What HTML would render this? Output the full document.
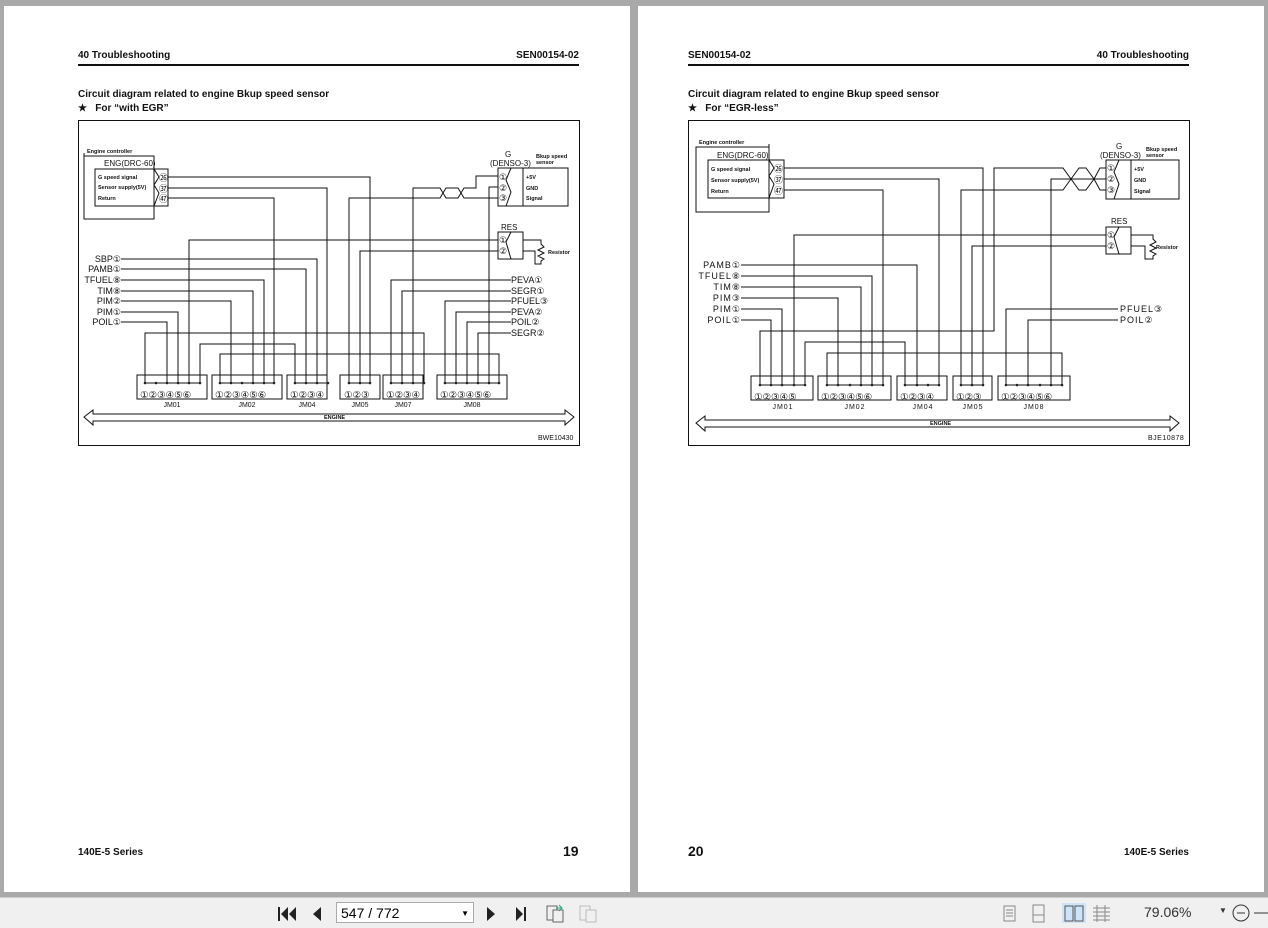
<!DOCTYPE html>
<html><head><meta charset="utf-8"><style>
body{margin:0;width:1268px;height:927px;background:#a9a9a9;position:relative;overflow:hidden;font-family:"Liberation Sans",sans-serif}
.page{position:absolute;top:6px;width:626px;height:886px;background:#fff}
.t{position:absolute;font-size:10px;font-weight:bold;color:#111;white-space:nowrap}
.rule{position:absolute;height:2px;background:#111}
svg text{font-family:"Liberation Sans","DejaVu Sans",sans-serif;fill:#111}
.tb{position:absolute;left:0;top:897px;width:1268px;height:30px;background:#f0f0f0;border-top:1px solid #ccc}
</style></head><body>

<div class="page" style="left:4px">
<div class="t" style="left:74px;top:44px">40 Troubleshooting</div>
<div class="t" style="right:51px;top:44px">SEN00154-02</div>
<div class="rule" style="left:74px;top:58px;width:501px"></div>
<div class="t" style="left:74px;top:83px">Circuit diagram related to engine Bkup speed sensor</div>
<div class="t" style="left:74px;top:97px">★&nbsp;&nbsp; For “with EGR”</div>
<div class="t" style="left:74px;top:841px">140E-5 Series</div>
<div class="t" style="left:559px;top:837px;font-size:14px">19</div>
<svg style="position:absolute;left:74px;top:114px" width="502" height="326" viewBox="0 0 502 326">
<g fill="none" stroke="#111" stroke-width="1">
<rect x="0.5" y="0.5" width="501" height="325"/>
<path d="M6 36H76V99H6Z"/><path d="M6 36V33"/>
<rect x="17" y="49" width="73" height="37"/>
<path d="M76 49L81 57L76 65L81 73L76 86"/>
<path d="M90 57H292V263M90 68H249V263M90 78H196V263"/>
<path d="M271 263V78H362L368 68H380L386 78H420"/>
<path d="M335 263V68H362L368 78H380L386 68H398V56H420"/>
<path d="M411 263V67H420"/>
<rect x="420" y="48" width="25" height="38"/><rect x="445" y="48" width="45" height="38"/>
<path d="M433 48L428 60L433 72L428 86"/>
<rect x="420" y="112" width="25" height="27"/><path d="M433 112L428 122L433 139"/>
<path d="M445 120H463V124L466 127L460 130L466 133L460 136L466 139L463 141V144H457V131H445"/>
<path d="M111 263V120H420M282 263V131H420"/>
<path d="M43 139H239V263M43 149H228V263M43 160H186V263M43 171H175V263M43 181H153V263M43 192H100V263M43 202H89V263"/>
<path d="M433 160H313V263M433 171H324V263M433 181H367V263M433 192H378V263M433 202H389V263M433 213H400V263"/>
<path d="M67 263V213H346V263M122 263V224H217V263M142 263V234H421V263"/>
<path d="M67 263H122M142 263H196M217 263H250M271 263H292M313 263H346M367 263H421"/>
<rect x="59" y="255" width="70" height="24"/><rect x="134" y="255" width="70" height="24"/><rect x="209" y="255" width="40" height="24"/><rect x="262" y="255" width="40" height="24"/><rect x="305" y="255" width="40" height="24"/><rect x="359" y="255" width="70" height="24"/>
<path d="M6 297L15 290V294H487V290L496 297L487 305V301H15V305Z"/>
</g>
<g fill="#222"><circle cx="67" cy="263" r="1.3"/><circle cx="78" cy="263" r="1.3"/><circle cx="89" cy="263" r="1.3"/><circle cx="100" cy="263" r="1.3"/><circle cx="111" cy="263" r="1.3"/><circle cx="122" cy="263" r="1.3"/><circle cx="142" cy="263" r="1.3"/><circle cx="153" cy="263" r="1.3"/><circle cx="164" cy="263" r="1.3"/><circle cx="175" cy="263" r="1.3"/><circle cx="186" cy="263" r="1.3"/><circle cx="196" cy="263" r="1.3"/><circle cx="217" cy="263" r="1.3"/><circle cx="228" cy="263" r="1.3"/><circle cx="239" cy="263" r="1.3"/><circle cx="250" cy="263" r="1.3"/><circle cx="271" cy="263" r="1.3"/><circle cx="282" cy="263" r="1.3"/><circle cx="292" cy="263" r="1.3"/><circle cx="313" cy="263" r="1.3"/><circle cx="324" cy="263" r="1.3"/><circle cx="335" cy="263" r="1.3"/><circle cx="346" cy="263" r="1.3"/><circle cx="367" cy="263" r="1.3"/><circle cx="378" cy="263" r="1.3"/><circle cx="389" cy="263" r="1.3"/><circle cx="400" cy="263" r="1.3"/><circle cx="411" cy="263" r="1.3"/><circle cx="421" cy="263" r="1.3"/></g>
<g font-size="5.5" font-weight="bold"><text x="9" y="33">Engine controller</text><text x="20" y="59">G speed signal</text><text x="20" y="69">Sensor supply(5V)</text><text x="20" y="80">Return</text><text x="448" y="59">+5V</text><text x="448" y="70">GND</text><text x="448" y="80">Signal</text><text x="458" y="38">Bkup speed</text><text x="458" y="44">sensor</text><text x="470" y="134">Resistor</text><text x="246" y="299">ENGINE</text></g>
<g font-size="8"><text x="26" y="46">ENG(DRC-60)</text><text x="427" y="37">G</text><text x="412" y="46">(DENSO-3)</text><text x="423" y="110">RES</text>
<text x="81" y="61" font-size="9">㉖</text><text x="81" y="72" font-size="9">㊲</text><text x="81" y="82" font-size="9">㊼</text>
<g font-size="9"><text x="421" y="60">①</text><text x="421" y="71">②</text><text x="421" y="81">③</text><text x="421" y="123">①</text><text x="421" y="134">②</text></g>
<g text-anchor="end" font-size="9"><text x="43" y="142">SBP①</text><text x="43" y="152">PAMB①</text><text x="43" y="163">TFUEL⑧</text><text x="43" y="174">TIM⑧</text><text x="43" y="184">PIM②</text><text x="43" y="195">PIM①</text><text x="43" y="205">POIL①</text></g>
<g font-size="9"><text x="433" y="163">PEVA①</text><text x="433" y="174">SEGR①</text><text x="433" y="184">PFUEL③</text><text x="433" y="195">PEVA②</text><text x="433" y="205">POIL②</text><text x="433" y="216">SEGR②</text></g>
<g font-size="9.5"><text x="62" y="278">①②③④⑤⑥</text><text x="137" y="278">①②③④⑤⑥</text><text x="212" y="278">①②③④</text><text x="266" y="278">①②③</text><text x="308" y="278">①②③④</text><text x="362" y="278">①②③④⑤⑥</text></g>
<g font-size="7" text-anchor="middle"><text x="94" y="287">JM01</text><text x="169" y="287">JM02</text><text x="229" y="287">JM04</text><text x="282" y="287">JM05</text><text x="325" y="287">JM07</text><text x="394" y="287">JM08</text></g>
<text x="460" y="320" font-size="7">BWE10430</text></g>
</svg>
</div>

<div class="page" style="left:638px">
<div class="t" style="left:50px;top:44px">SEN00154-02</div>
<div class="t" style="right:75px;top:44px">40 Troubleshooting</div>
<div class="rule" style="left:50px;top:58px;width:501px"></div>
<div class="t" style="left:50px;top:83px">Circuit diagram related to engine Bkup speed sensor</div>
<div class="t" style="left:50px;top:97px">★&nbsp;&nbsp; For “EGR-less”</div>
<div class="t" style="left:50px;top:837px;font-size:14px">20</div>
<div class="t" style="right:75px;top:841px">140E-5 Series</div>
<svg style="position:absolute;left:50px;top:114px" width="502" height="326" viewBox="0 0 502 326">
<g fill="none" stroke="#111" stroke-width="1">
<rect x="0.5" y="0.5" width="501" height="325"/>
<path d="M8 27H81V92H8Z"/><path d="M81 27V24"/>
<rect x="20" y="40" width="76" height="38"/>
<path d="M81 40L86 48L81 56L86 64L81 78"/>
<path d="M96 48H295V265M96 59H251V265M96 70H195V265"/>
<path d="M273 265V70H375L383 59L391 48H398L406 59L412 70H418"/>
<path d="M72 265V211H306V48H375L383 59L391 70H398L406 59L412 48H418"/>
<path d="M363 265V59H418"/>
<rect x="418" y="40" width="25" height="39"/><rect x="443" y="40" width="48" height="39"/>
<path d="M431 40L426 52L431 64L426 79"/>
<rect x="418" y="107" width="25" height="27"/><path d="M431 107L426 117L431 134"/>
<path d="M443 115H465V119L468 122L462 125L468 128L462 131L468 134L465 136V139H457V126H443"/>
<path d="M106 265V115H418M284 265V126H418"/>
<path d="M53 145H229V265M53 156H184V265M53 167H173V265M53 178H150V265M53 189H94V265M53 200H83V265"/>
<path d="M430 189H318V265M430 200H340V265"/>
<path d="M117 265V222H217V265M139 265V233H374V265"/>
<path d="M72 265H117M139 265H195M217 265H251M273 265H295M318 265H374"/>
<rect x="63" y="256" width="62" height="24"/><rect x="130" y="256" width="73" height="24"/><rect x="209" y="256" width="50" height="24"/><rect x="265" y="256" width="39" height="24"/><rect x="310" y="256" width="72" height="24"/>
<path d="M8 303L17 296V300H482V296L491 303L482 311V307H17V311Z"/>
</g>
<g fill="#222"><circle cx="72" cy="265" r="1.3"/><circle cx="83" cy="265" r="1.3"/><circle cx="94" cy="265" r="1.3"/><circle cx="106" cy="265" r="1.3"/><circle cx="117" cy="265" r="1.3"/><circle cx="139" cy="265" r="1.3"/><circle cx="150" cy="265" r="1.3"/><circle cx="162" cy="265" r="1.3"/><circle cx="173" cy="265" r="1.3"/><circle cx="184" cy="265" r="1.3"/><circle cx="195" cy="265" r="1.3"/><circle cx="217" cy="265" r="1.3"/><circle cx="229" cy="265" r="1.3"/><circle cx="240" cy="265" r="1.3"/><circle cx="251" cy="265" r="1.3"/><circle cx="273" cy="265" r="1.3"/><circle cx="284" cy="265" r="1.3"/><circle cx="295" cy="265" r="1.3"/><circle cx="318" cy="265" r="1.3"/><circle cx="329" cy="265" r="1.3"/><circle cx="340" cy="265" r="1.3"/><circle cx="352" cy="265" r="1.3"/><circle cx="363" cy="265" r="1.3"/><circle cx="374" cy="265" r="1.3"/></g>
<g font-size="5.5" font-weight="bold"><text x="11" y="24">Engine controller</text><text x="23" y="51">G speed signal</text><text x="23" y="62">Sensor supply(5V)</text><text x="23" y="73">Return</text><text x="446" y="51">+5V</text><text x="446" y="62">GND</text><text x="446" y="73">Signal</text><text x="458" y="31">Bkup speed</text><text x="458" y="37">sensor</text><text x="468" y="129">Resistor</text><text x="242" y="305">ENGINE</text></g>
<g font-size="8"><text x="29" y="38">ENG(DRC-60)</text><text x="428" y="29">G</text><text x="412" y="38">(DENSO-3)</text><text x="423" y="104">RES</text>
<g font-size="9"><text x="86" y="52">㉖</text><text x="86" y="63">㊲</text><text x="86" y="74">㊼</text>
<text x="419" y="51">①</text><text x="419" y="62">②</text><text x="419" y="73">③</text><text x="419" y="118">①</text><text x="419" y="129">②</text></g>
<g text-anchor="end" letter-spacing="1" font-size="9"><text x="53" y="148">PAMB①</text><text x="53" y="159">TFUEL⑧</text><text x="53" y="170">TIM⑧</text><text x="53" y="181">PIM③</text><text x="53" y="192">PIM①</text><text x="53" y="203">POIL①</text></g>
<g letter-spacing="1" font-size="9"><text x="432" y="192">PFUEL③</text><text x="432" y="203">POIL②</text></g>
<g font-size="9.5"><text x="66" y="280">①②③④⑤</text><text x="133" y="280">①②③④⑤⑥</text><text x="212" y="280">①②③④</text><text x="268" y="280">①②③</text><text x="313" y="280">①②③④⑤⑥</text></g>
<g font-size="7" text-anchor="middle" letter-spacing="1"><text x="95" y="289">JM01</text><text x="167" y="289">JM02</text><text x="235" y="289">JM04</text><text x="285" y="289">JM05</text><text x="346" y="289">JM08</text></g>
<text x="460" y="320" font-size="7" letter-spacing="0.5">BJE10878</text></g>
</svg>
</div>

<div class="tb">
<svg style="position:absolute;left:276px;top:8px" width="260" height="16" viewBox="0 0 260 16" fill="#222">
<rect x="2" y="1" width="2" height="14"/><path d="M12 1V15L5 8Z"/><path d="M20 1V15L13 8Z"/>
<path d="M45 1V15L37 8Z"/>
<path d="M211 1V15L219 8Z"/>
<path d="M240 1V15L247 8Z"/><rect x="248" y="1" width="2" height="14"/>
</svg>
<div style="position:absolute;left:336px;top:4px;width:138px;height:21px;background:#fff;border:1px solid #aaa;font-size:14px;line-height:21px;padding-left:4px;box-sizing:border-box">547 / 772<span style="position:absolute;right:4px;font-size:8px">▼</span></div>
<svg style="position:absolute;left:544px;top:5px" width="56" height="20" viewBox="0 0 56 20" fill="none" stroke="#666"><rect x="3" y="3" width="10" height="14"/><rect x="9" y="7" width="10" height="12" fill="#f0f0f0"/><path d="M12 5H18M15 2L18 5L15 8" stroke="#2a7"/><rect x="36" y="3" width="10" height="14" stroke="#bbb"/><rect x="42" y="7" width="10" height="12" fill="#f0f0f0" stroke="#bbb"/></svg>
<svg style="position:absolute;left:1000px;top:5px" width="122" height="20" viewBox="0 0 122 20" fill="none" stroke="#888"><rect x="4" y="3" width="11" height="15"/><path d="M6 7H13M6 10H13M6 13H13"/><rect x="33" y="2" width="11" height="10"/><rect x="33" y="12" width="11" height="7"/><rect x="62" y="0" width="24" height="20" fill="#cde3f7" stroke="none"/><rect x="65" y="3" width="8" height="15" stroke="#555"/><rect x="75" y="3" width="8" height="15" stroke="#555"/><path d="M97 2V19M105 2V19M93 5H110M93 9H110M93 13H110M93 17H110"/></svg>
<div style="position:absolute;left:1144px;top:6px;font-size:14px;color:#333">79.06%</div>
<div style="position:absolute;left:1219px;top:8px;font-size:8px;color:#333">▼</div>
<svg style="position:absolute;left:1230px;top:4px" width="38" height="22" viewBox="0 0 38 22" fill="none" stroke="#333"><circle cx="11" cy="11" r="8"/><path d="M7 11H15M24 11H38"/></svg>
</div>
</body></html>
